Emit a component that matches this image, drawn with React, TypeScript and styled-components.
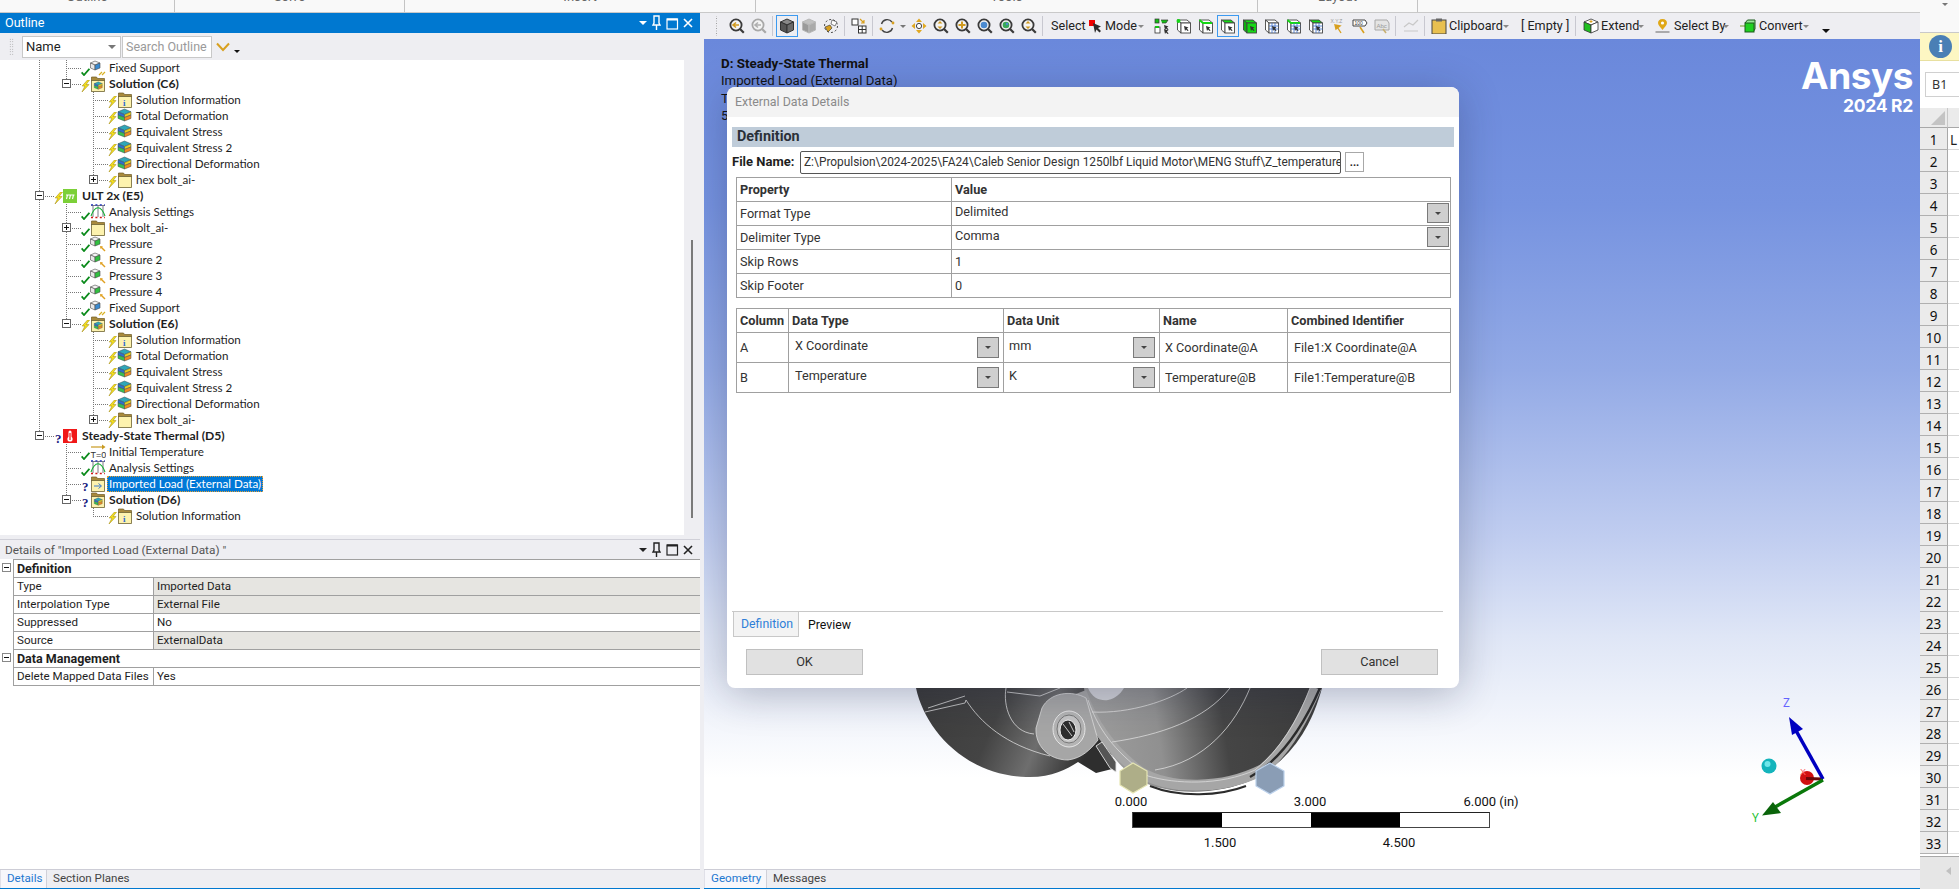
import React from "react";
import styled, { createGlobalStyle, css } from "styled-components";

const FONT = `Roboto, "Noto Sans", "Liberation Sans", sans-serif`;

const Global = createGlobalStyle`
  html, body { margin: 0; padding: 0; background: #eeeef2; overflow: hidden; }
  #root { width: 1959px; height: 889px; }
  * { box-sizing: border-box; }
`;

const Page = styled.div`
  width: 1959px; height: 889px; display: flex; overflow: hidden;
  font: 11.5px/16px ${FONT}; color: #1e1e1e; background: #eeeef2;
`;
const MainColumn = styled.div`width: 1920px; display: flex; flex-direction: column;`;
const Ribbon = styled.div`
  height: 13px; flex: none; display: flex; background: #f9f9f9; border-bottom: 1px solid #c9c9c9; overflow: hidden;
`;
const RibbonGroup = styled.div<{ $w: number }>`
  width: ${p => p.$w}px; flex: none; height: 12px; border-right: 1px solid #c4c4c4; display: flex; justify-content: center;
  & > span { font-size: 13px; line-height: 16px; margin-top: -11px; color: #666; }
`;
const Workspace = styled.div`flex: 1; display: flex; min-height: 0;`;

/* ---------- left pane ---------- */
const LeftPane = styled.div`width: 700px; flex: none; display: flex; flex-direction: column;`;
const TitleBar = styled.div<{ $active?: boolean }>`
  height: 20px; flex: none; display: flex; align-items: center; padding: 0 6px 0 5px; gap: 4px; white-space: nowrap;
  background: ${p => (p.$active ? "#0078d0" : "#eeeef2")};
  color: ${p => (p.$active ? "#fff" : "#555")};
  font-size: ${p => (p.$active ? "12.6px" : "11.8px")};
  ${p => !p.$active && css`border-top: 1px solid #d0d0d8;`}
`;
const TitleGrip = styled.div<{ $active?: boolean }>`
  flex: 1; height: 7px; margin: 0 4px 0 3px;
  background-image: radial-gradient(${p => (p.$active ? "#6db0e8" : "#bcbcc0")} 0.6px, transparent 0.7px);
  background-size: 2px 2px;
`;
const TitleButtons = styled.div`display: flex; gap: 3px; align-items: center;`;
const OutlineTools = styled.div`
  height: 27px; flex: none; display: flex; align-items: center; padding: 0 0 0 9px; background: #eeeef2;
`;
const GripDots = styled.div`
  width: 5px; height: 18px; margin-right: 8px;
  background-image: radial-gradient(#9a9a9a 0.7px, transparent 0.8px); background-size: 2.5px 2.5px;
`;
const NameSelect = styled.div`
  width: 99px; height: 22px; background: #fff; border: 1px solid #c8c8c8; display: flex; align-items: center;
  justify-content: space-between; padding: 0 4px 0 3px; font-size: 13px;
`;
const SearchBox = styled.div`
  width: 90px; height: 22px; margin-left: 1px; background: #fff; border: 1px solid #c8c8c8; display: flex; align-items: center;
  padding: 0 3px; color: #9a9a9a; font-size: 12.5px; white-space: nowrap; overflow: hidden;
`;
const CaretDown = styled.span<{ $c?: string; $s?: number }>`
  display: inline-block; flex: none; width: 0; height: 0;
  border-left: ${p => p.$s ?? 4}px solid transparent; border-right: ${p => p.$s ?? 4}px solid transparent;
  border-top: ${p => p.$s ?? 4}px solid ${p => p.$c ?? "#555"};
`;
const FilterChevron = styled.span`display: flex; margin-left: 4px; width: 16px;`;
const OverflowCaret = styled.span`display: flex; margin: 9px 0 0 2px;`;

const TreeFrame = styled.div`height: 475px; flex: none; display: flex;`;
const Tree = styled.div`width: 684px; background: #fff; overflow: hidden;`;
const ScrollTrack = styled.div`flex: 1; background: #eeeef2; display: flex; justify-content: center; padding-top: 180px;`;
const ScrollThumb = styled.div`width: 2px; height: 278px; background: #7a7a7a;`;
const PaneGap = styled.div`height: 4px; flex: none; background: #eeeef2;`;

const dots = `repeating-linear-gradient(to bottom, #777 0 1px, transparent 1px 2px)`;
const Row = styled.div`height: 16px; display: flex; align-items: stretch; padding-left: 39px; white-space: nowrap;`;
const Guide = styled.div<{ $on: boolean }>`
  width: 27px; flex: none; position: relative;
  ${p => p.$on && css`background: ${dots} left top / 1px 100% no-repeat;`}
`;
const Branch = styled.div<{ $last?: boolean }>`
  width: 15px; flex: none; position: relative;
  background:
    ${dots} left top / 1px ${p => (p.$last ? "8px" : "100%")} no-repeat,
    repeating-linear-gradient(to right, #777 0 1px, transparent 1px 2px) left 8px / 15px 1px no-repeat;
`;
const Expander = styled.span<{ $open: boolean }>`
  position: absolute; left: -4px; top: 3px; width: 9px; height: 9px; border: 1px solid #666; background: #fff;
  &::before { content: ""; position: absolute; left: 1px; top: 3px; width: 5px; height: 1px; background: #111; }
  ${p => !p.$open && css`&::after { content: ""; position: absolute; left: 3px; top: 1px; width: 1px; height: 5px; background: #111; }`}
`;
const StatusSlot = styled.span`
  width: 9px; flex: none; position: relative; display: flex; align-items: flex-end; color: #1a2a8a;
`;
const QuestionMark = styled.span`font: bold 13px/13px "Liberation Serif", serif; color: #17207f; margin: 0 0 -1px 1px;`;
const IconSlot = styled.span`width: 16px; flex: none; display: flex; align-items: center;`;
const NodeLabel = styled.span<{ $bold?: boolean; $sel?: boolean }>`
  margin-left: 1px; padding: 0 2px; line-height: 16px; height: 16px; font-family: Lato, ${FONT}; font-size: 11.6px; font-weight: ${p => (p.$bold ? 700 : 400)};
  ${p => p.$bold && css`font-size: 12.2px;`}
  ${p => p.$sel && css`background: #0078d7; color: #fff; outline: 1px dotted #e8a030; outline-offset: -1px;`}
`;

const DetailsBody = styled.div`flex: 1; background: #fff; display: flex; flex-direction: column; min-height: 0; font-size: 11.6px;`;
const DRow = styled.div`display: flex; height: 18px; padding-left: 13px; position: relative;`;
const DGroup = styled.div`
  flex: 1; border-top: 1px solid #a0a0a0; border-left: 1px solid #a0a0a0; padding-left: 3px;
  font-weight: 700; line-height: 17px; font-size: 12.5px;
`;
const DCellA = styled.div`
  width: 140px; flex: none; border-top: 1px solid #a0a0a0; border-left: 1px solid #a0a0a0; padding-left: 3px; line-height: 17px;
  white-space: nowrap; overflow: hidden;
`;
const DCellB = styled.div<{ $grey?: boolean }>`
  flex: 1; border-top: 1px solid #a0a0a0; border-left: 1px solid #a0a0a0; padding-left: 3px; line-height: 17px;
  background: ${p => (p.$grey ? "#e6e5e1" : "#fff")};
`;
const DBottom = styled.div`height: 1px; margin-left: 13px; background: #a0a0a0;`;
const DExpander = styled.span`
  position: absolute; left: 2px; top: 4px; width: 9px; height: 9px; border: 1px solid #888; background: #fff;
  &::before { content: ""; position: absolute; left: 1px; top: 3px; width: 5px; height: 1px; background: #111; }
`;
const TabBar = styled.div`
  height: 20px; flex: none; display: flex; background: #eeeef2; border-top: 1px solid #cdcdd6; border-bottom: 1px solid #0078d0;
`;
const TabItem = styled.div<{ $on?: boolean; $w?: number }>`
  height: 18px; line-height: 17px; padding: 0 6px; font-size: 11.6px;
  ${p => p.$w && css`width: ${p.$w}px;`}
  ${p => p.$on ? css`background: #f7f7fb; color: #1e78d0; border-right: 1px solid #d0d0d8; border-left: 1px solid #e0e0e8;` : css`color: #444;`}
`;

/* ---------- view pane ---------- */
const ViewPane = styled.div`flex: 1; display: flex; flex-direction: column; padding-left: 4px; min-width: 0;`;
const Toolbar = styled.div`
  height: 26px; flex: none; display: flex; align-items: center; padding-left: 8px; background: #eeeef2; white-space: nowrap;
`;
const ToolGrip = styled.div`
  width: 8px; height: 20px; margin-right: 6px;
  background: radial-gradient(#a0a0a0 0.7px, transparent 0.8px) center / 2.5px 2.5px repeat-y;
`;
const ToolBtn = styled.span<{ $on?: boolean }>`
  width: 22px; height: 22px; flex: none; display: flex; align-items: center; justify-content: center;
  ${p => p.$on && css`outline: 1px solid #3c9af0; outline-offset: -1px;`}
`;
const ToolSep = styled.span`width: 1px; height: 20px; flex: none; background: #c8c8d0; margin: 0 3px 0 2px;`;
const ToolText = styled.span<{ $w: number; $ml?: number }>`
  width: ${p => p.$w}px; margin-left: ${p => p.$ml ?? 0}px; flex: none; font-size: 12.6px; line-height: 26px; color: #222;
`;
const ToolArrow = styled.span<{ $w?: number }>`
  width: ${p => p.$w ?? 10}px; flex: none; display: flex; justify-content: center; align-items: center; height: 26px;
`;
const ToolSpace = styled.span<{ $w: number }>`width: ${p => p.$w}px; flex: none;`;
const Overflow = styled.span`display: flex; margin: 10px 0 0 11px;`;

const Viewport = styled.div`
  flex: 1; position: relative; overflow: hidden;
  background: linear-gradient(to bottom, #6a88db 0%, #7693e0 20%, #93aae6 40%, #c0cdf0 60%, #dfe6f6 72%, #fff 89%, #fff 100%);
`;
const Scene = styled.svg`position: absolute; left: 0; top: 0;`;
const ModelTitle = styled.div`position: absolute; left: 17px; top: 16px; font-size: 13.2px; line-height: 17.4px; color: #111;`;
const ModelHead = styled.div`font-weight: 700; font-size: 13.4px;`;
const BrandBlock = styled.div`
  position: absolute; right: 7px; top: 17px; color: #fff; font-family: Inter, ${FONT}; font-weight: 700; text-align: right;
`;
const BrandName = styled.div`font-size: 37px; line-height: 40px; letter-spacing: -0.5px;`;
const BrandVersion = styled.div`font-size: 17.5px; line-height: 20px; letter-spacing: -0.3px;`;
const ScaleLabel = styled.span<{ $x: number; $y: number }>`
  position: absolute; left: ${p => p.$x}px; top: ${p => p.$y}px; font-size: 13px; line-height: 16px; color: #111; transform: translateX(-50%); white-space: nowrap;
`;
const ScaleBar = styled.div`
  position: absolute; left: 428px; top: 773px; width: 358px; height: 16px; display: flex; border: 1px solid #444; border-top-color: #222; background: #fff;
`;
const ScaleSeg = styled.div<{ $black: boolean }>`flex: 1; background: ${p => (p.$black ? "#000" : "#fff")};`;

/* ---------- dialog ---------- */
const Dialog = styled.div`
  position: absolute; left: 23px; top: 48px; width: 732px; height: 601px; background: #fff; border-radius: 8px;
  box-shadow: 0 6px 40px rgba(20, 30, 60, 0.28); display: flex; flex-direction: column; overflow: hidden; font-size: 12.7px;
`;
const DialogTitle = styled.div`
  height: 30px; flex: none; background: #f3f3f3; color: #8a8a8a; font-size: 12.4px; line-height: 30px; padding-left: 8px; border-radius: 8px 8px 0 0;
`;
const DialogBody = styled.div`flex: 1; display: flex; flex-direction: column; padding: 10px 5px 0;`;
const SectionBar = styled.div`
  height: 20px; flex: none; background: #bfccd9; color: #2a3038; font-weight: 700; font-size: 14.4px; line-height: 20px; padding-left: 5px;
`;
const FileRow = styled.div`display: flex; align-items: center; height: 22px; margin-top: 4px;`;
const FileLabel = styled.span`width: 68px; flex: none; font-weight: 700; font-size: 13px; white-space: nowrap;`;
const FileInput = styled.div`
  width: 541px; height: 23px; flex: none; border: 1px solid #555; border-radius: 2px; line-height: 21px; padding: 0 3px; white-space: nowrap; overflow: hidden;
  color: #333; font-size: 11.9px;
`;
const DotsButton = styled.div`
  width: 19px; height: 20px; flex: none; margin-left: 4px; border: 1px solid #a8a8a8; background: #fff; text-align: center; font-weight: 700; line-height: 20px; font-size: 11px;
`;
const Table = styled.table`
  border-collapse: collapse; table-layout: fixed; width: 714px; margin-left: 4px; font-size: 12.7px; color: #333;
  td, th { border: 1px solid #a0a0a0; padding: 0 3px; text-align: left; position: relative; white-space: nowrap; overflow: hidden; }
  th { font-weight: 700; height: 24px; line-height: 20px; }
  td { height: 24px; }
`;
const PropTable = styled(Table)`margin-top: 4px;`;
const DataTable = styled(Table)`
  margin-top: 10px;
  td { height: 30px; }
`;
const PadText = styled.span<{ $l?: number; $up?: number }>`
  display: block; padding-left: ${p => p.$l ?? 0}px; margin-top: ${p => -(p.$up ?? 0)}px;
`;
const DropBtn = styled.span<{ $big?: boolean }>`
  position: absolute; right: ${p => (p.$big ? 4 : 1)}px; top: ${p => (p.$big ? 4 : 1)}px;
  width: 22px; height: ${p => (p.$big ? 21 : 20)}px;
  background: #cfcfcf; border: 1px solid #7a7a7a; display: flex; align-items: center; justify-content: center;
`;
const DialogSpacer = styled.div`flex: 1;`;
const TabLine = styled.div`height: 1px; width: 711px; flex: none; background: #c8c8c8;`;
const DlgTabs = styled.div`display: flex; height: 25px; flex: none; margin-left: 1px;`;
const DlgTab = styled.div<{ $on?: boolean }>`
  height: 25px; line-height: 27px; font-size: 12.3px; padding: 0 9px 0 9px;
  ${p => p.$on ? css`width: 66px; padding-left: 7px; background: #f3f3f3; border: 1px solid #c8c8c8; border-top: 0; color: #2f7fd8; line-height: 25px;` : css`color: #111;`}
`;
const DlgActions = styled.div`display: flex; justify-content: space-between; padding: 12px 16px 0 14px; height: 51px; flex: none;`;
const DlgButton = styled.div`
  width: 117px; height: 26px; background: #e1e1e1; border: 1px solid #c0c0c0; text-align: center; line-height: 24px; font-size: 12.7px; color: #333;
`;

/* ---------- right panel ---------- */
const RightPanel = styled.div`width: 39px; flex: none; display: flex; flex-direction: column; background: #fff; overflow: hidden;`;
const RightTop = styled.div`
  height: 33px; flex: none; background: #f9f9f9; border-bottom: 1px solid #c9c9c9; display: flex; justify-content: center; padding: 3px 0 0 10px;
`;
const InfoBand = styled.div`height: 28px; flex: none; background: #fdf7c3; display: flex; align-items: center; padding-left: 9px; border-bottom: 1px solid #e8e0a0;`;
const InfoDot = styled.span`
  width: 23px; height: 23px; flex: none; border-radius: 50%; background: #4a7fb5; color: #fff; font: 700 17px/23px "Liberation Serif", serif; text-align: center;
`;
const NameBox = styled.div`
  height: 25px; flex: none; margin: 11px 0 11px 5px; border: 1px solid #d0d0d0; border-right: 0; font: 12.5px/23px "Noto Sans", sans-serif; padding-left: 6px; color: #333;
`;
const GridRow = styled.div<{ $h?: number }>`display: flex; height: ${p => p.$h ?? 22}px; flex: none;`;
const RowHead = styled.div`
  width: 28px; flex: none; background: #ebebeb; border-bottom: 1px solid #b0b0b0; border-right: 1px solid #a8a8a8; text-align: center; font: 13.5px/25px "Noto Sans", sans-serif; color: #111; overflow: hidden;
`;
const Corner = styled.div`width: 28px; flex: none; background: #ebebeb; border-bottom: 1px solid #a8a8a8; border-right: 1px solid #c8c8c8; display: flex; align-items: flex-end; justify-content: flex-end; padding: 0 2px 2px 0;`;
const Cell = styled.div`flex: 1; border-bottom: 1px solid #d8d8d8; font: 13.5px/25px "Noto Sans", sans-serif; padding-left: 2px; overflow: hidden;`;
const ColHead = styled.div`flex: 1; background: #ebebeb; border-bottom: 1px solid #a8a8a8;`;
const SheetFoot = styled.div`flex: 1; margin-top: 2px; background: #e6e6e6; border-top: 1px solid #a8a8a8; display: flex; align-items: center; padding: 0 0 4px 26px;`;
const LeftTri = styled.span`width: 0; height: 0; border-top: 4px solid transparent; border-bottom: 4px solid transparent; border-right: 5px solid #c0c0c0;`;

/* ---------- icons ---------- */
const G = ({ s = 16, h, children }: { s?: number; h?: number; children: React.ReactNode }) => (
  <svg width={s} height={h ?? s} viewBox={`0 0 ${s} ${h ?? s}`} fill="none">{children}</svg>
);
const Check = () => (
  <svg width="9" height="8" viewBox="0 0 9 8"><path d="M0.6 4.4 L3 7 L8.4 0.8" stroke="#0a8a1a" strokeWidth="1.8" fill="none" /></svg>
);
const Bolt = () => (
  <svg width="9" height="12" viewBox="0 0 9 12"><path d="M6.5 0 L1.2 6 L4 6 L1 12 L8 4.6 L5 4.6 L8.5 0 Z" fill="#f6e21c" stroke="#a89018" strokeWidth="0.6" /></svg>
);
const Folder = ({ children, body = "#fdf2ae" }: { children?: React.ReactNode; body?: string }) => (
  <G>
    <path d="M1.5 1 H6.5 L7.5 2.5 H14.5 V5 H1.5 Z" fill="#a98a3c" stroke="#6f5a24" strokeWidth="0.7" />
    <rect x="1.5" y="4.5" width="13" height="11" fill={body} stroke="#6f6433" strokeWidth="0.8" />
    {children}
  </G>
);
const RainbowCube = ({ x = 0, y = 0, k = 1 }: { x?: number; y?: number; k?: number }) => (
  <g transform={`translate(${x} ${y}) scale(${k})`} stroke="#3f4a4f" strokeWidth="0.5">
    <polygon points="7.5,1 14,3.8 7.5,6.6 1,3.8" fill="#2fa6b8" />
    <polygon points="1,3.8 7.5,6.6 7.5,9.5 1,7" fill="#2d6fd0" />
    <polygon points="1,7 7.5,9.5 7.5,13 1,10.4" fill="#38c050" />
    <polygon points="7.5,6.6 14,3.8 14,7 7.5,9.5" fill="#e8d020" />
    <polygon points="7.5,9.5 14,7 14,10.4 7.5,13" fill="#f08a20" />
  </g>
);
const SupportCube = ({ accent }: { accent: string }) => (
  <g stroke="#4a4a4a" strokeWidth="0.6">
    <polygon points="5,1 10,3 5,5 0.5,3" fill="#f4f4f4" />
    <polygon points="0.5,3 5,5 5,10 0.5,8" fill="#e8e8e8" />
    <polygon points="5,5 10,3 10,8 5,10" fill={accent} />
  </g>
);
const TreeIcon = ({ kind }: { kind: string }) => {
  switch (kind) {
    case "support":
      return <G><SupportCube accent="#3a8ad0" /><path d="M9 15 L12 12 M12 15 L15 12" stroke="#d8b020" strokeWidth="1.2" /></G>;
    case "pressure":
      return <G><SupportCube accent="#30c040" /><path d="M15 15 L11 11" stroke="#e0a020" strokeWidth="1.4" /><path d="M10 10 L13 10.5 L10.5 13 Z" fill="#e0a020" /></G>;
    case "solution":
      return <Folder><RainbowCube x={3.6} y={5.2} k={0.62} /></Folder>;
    case "info":
      return <Folder><text x="6" y="14" fontSize="9" fontFamily="Liberation Serif" fontWeight="700" fill="#2a6ad0">i</text></Folder>;
    case "result":
      return <G><RainbowCube /></G>;
    case "folder":
      return <Folder />;
    case "import":
      return <Folder><path d="M4 10 H11 M8.5 7.5 L11.5 10 L8.5 12.5" stroke="#3a7ad0" strokeWidth="1" /></Folder>;
    case "ult":
      return (
        <G h={14} s={14}>
          <rect width="14" height="14" fill="#7cd038" />
          <path d="M3 6 H11.5 M4.5 6 L3.5 10 M7.5 6 L6.5 10 M10.5 6 L9.5 10" stroke="#fff" strokeWidth="1.1" />
        </G>
      );
    case "thermal":
      return (
        <G h={14} s={14}>
          <rect width="14" height="14" fill="#f01818" />
          <rect x="5.5" y="1.5" width="3" height="8" rx="1.5" fill="#fff" />
          <circle cx="7" cy="10" r="2.6" fill="#fff" />
          <rect x="6.4" y="4" width="1.2" height="7" fill="#f01818" />
        </G>
      );
    case "settings":
      return (
        <G>
          <path d="M1 1.5 H15 M3 2 V13 M8 2 V13 M13 2 V13" stroke="#556" strokeWidth="0.8" />
          <path d="M1 13.5 H15" stroke="#d01818" strokeWidth="1.4" strokeDasharray="2 2.4" />
          <path d="M1 0.8 H15" stroke="#1a30c0" strokeWidth="1.2" strokeDasharray="2 2.4" />
          <path d="M1 12 C5 1 11 1 15 12" stroke="#10b030" strokeWidth="1.1" />
        </G>
      );
    case "init":
      return (
        <G>
          <path d="M1 3 H13" stroke="#c89a20" strokeWidth="1.2" />
          <path d="M12 0.5 L15.5 3 L12 5.5 Z" fill="#c89a20" />
          <text x="0.5" y="14" fontSize="9" fontFamily="Liberation Sans" fill="#333">T=0</text>
        </G>
      );
    default:
      return null;
  }
};
const Mag = ({ inner, dim }: { inner: string; dim?: boolean }) => {
  const c = dim ? "#a8a8a8" : "#3a3a3a";
  return (
    <G>
      <line x1="10.8" y1="10.8" x2="14.8" y2="14.8" stroke={c} strokeWidth="2.2" />
      <circle cx="7" cy="7" r="5.6" fill="#f4f4f4" stroke={c} strokeWidth="1.8" />
      {inner === "back" && <path d="M10 7 H4.5 M7 4.5 L4 7 L7 9.5" stroke={dim ? "#b0b0b0" : "#d09a20"} strokeWidth="1.6" />}
      {inner === "plus" && <path d="M7 3.5 V10.5 M3.5 7 H10.5" stroke="#d09a20" strokeWidth="2" />}
      {inner === "blue" && <circle cx="7" cy="7" r="3.3" fill="#4a8ad0" />}
      {inner === "green" && <><circle cx="7" cy="7" r="3.3" fill="#38a858" /><circle cx="8" cy="6" r="1.2" fill="#4a8ad0" /></>}
      {inner === "updown" && <path d="M7 3 L9.5 5.5 H4.5 Z M7 11 L4.5 8.5 H9.5 Z" fill="#d09a20" />}
    </G>
  );
};
const Iso = ({ top, left, right, stroke = "#333" }: { top: string; left: string; right: string; stroke?: string }) => (
  <G>
    <g stroke={stroke} strokeWidth="1">
      <polygon points="8,1 14.5,4 8,7 1.5,4" fill={top} />
      <polygon points="1.5,4 8,7 8,15 1.5,12" fill={left} />
      <polygon points="8,7 14.5,4 14.5,12 8,15" fill={right} />
    </g>
  </G>
);
const Cursor = ({ x, y, c = "#333" }: { x: number; y: number; c?: string }) => (
  <path transform={`translate(${x} ${y})`} d="M0 0 L4.5 1.6 L2.9 2.6 L4.6 4.4 L3.6 5 L2 3.4 L1 5 Z" fill={c} />
);
const SelBox = ({ mode, mesh }: { mode: string; mesh?: boolean }) => {
  const body = mode === "body";
  return (
    <G>
      <g stroke="#444" strokeWidth="0.9">
        <polygon points="1.5,2 11,2 14.5,5 5,5" fill={body || mode === "face" ? "#16d816" : "#fff"} />
        <polygon points="1.5,2 5,5 5,15 1.5,12" fill={body ? "#10b010" : "#fff"} />
        <rect x="5" y="5" width="9.5" height="10" fill={body ? "#16d816" : "#fff"} />
      </g>
      {mode === "vertex" && <circle cx="2.5" cy="3" r="2" fill="#16d816" />}
      {mode === "edge" && <path d="M1.5 2 L5 5 H14" stroke="#16d816" strokeWidth="2" />}
      {mesh && <path d="M8 5 V15 M11 5 V15 M5 8 H14.5 M5 11 H14.5" stroke="#3a70d0" strokeWidth="0.8" />}
      <Cursor x={8} y={8} />
    </G>
  );
};

const toolIcons = {
  sel4: (
    <G>
      <rect x="1" y="1" width="4" height="4" fill="#16c016" stroke="#333" strokeWidth="0.7" />
      <path d="M7 2 H14 L12 5 H8" fill="#16c016" stroke="#333" strokeWidth="0.7" />
      <rect x="1" y="9" width="5" height="6" fill="#fff" stroke="#333" strokeWidth="0.8" />
      <path d="M1 9 H5" stroke="#16c016" strokeWidth="2" />
      <Cursor x={10} y={7} />
      <Cursor x={10} y={11} />
    </G>
  ),
};

/* ---------- data ---------- */
type Node = {
  label: string; level: 1 | 2 | 3; icon: string; status: "check" | "bolt" | "q";
  guides: boolean[]; open?: boolean; bold?: boolean; last?: boolean; sel?: boolean;
};
const L2 = (label: string, icon: string, status: Node["status"], extra: Partial<Node> = {}, on = true): Node =>
  ({ label, level: 2, icon, status, guides: [on], ...extra });
const L3 = (label: string, icon: string, status: Node["status"], extra: Partial<Node> = {}, on = true): Node =>
  ({ label, level: 3, icon, status, guides: [on, false], ...extra });
const results = (): Node[] => [
  L3("Solution Information", "info", "bolt"),
  L3("Total Deformation", "result", "bolt"),
  L3("Equivalent Stress", "result", "bolt"),
  L3("Equivalent Stress 2", "result", "bolt"),
  L3("Directional Deformation", "result", "bolt"),
  L3("hex bolt_ai-", "folder", "bolt", { open: false, last: true }),
];
const nodes: Node[] = [
  L2("Fixed Support", "support", "check"),
  L2("Solution (C6)", "solution", "bolt", { open: true, bold: true, last: true }),
  ...results(),
  { label: "ULT 2x (E5)", level: 1, icon: "ult", status: "bolt", guides: [], open: true, bold: true },
  L2("Analysis Settings", "settings", "check"),
  L2("hex bolt_ai-", "folder", "check", { open: false }),
  L2("Pressure", "pressure", "check"),
  L2("Pressure 2", "pressure", "check"),
  L2("Pressure 3", "pressure", "check"),
  L2("Pressure 4", "pressure", "check"),
  L2("Fixed Support", "support", "check"),
  L2("Solution (E6)", "solution", "bolt", { open: true, bold: true, last: true }),
  ...results(),
  { label: "Steady-State Thermal (D5)", level: 1, icon: "thermal", status: "q", guides: [], open: true, bold: true, last: true },
  L2("Initial Temperature", "init", "check", {}, false),
  L2("Analysis Settings", "settings", "check", {}, false),
  L2("Imported Load (External Data)", "import", "q", { sel: true }, false),
  L2("Solution (D6)", "solution", "q", { open: true, bold: true, last: true }, false),
  L3("Solution Information", "info", "bolt", { last: true }, false),
];

const WindowButtons = ({ light }: { light?: boolean }) => {
  const c = light ? "#fff" : "#222";
  return (
    <TitleButtons>
      <CaretDown $c={c} $s={4} />
      <svg width="13" height="16" viewBox="0 0 13 16"><path d="M4 1 H9 V8 L10 10 H3 L4 8 Z M6.5 10 V15" stroke={c} strokeWidth="1.4" fill="none" /></svg>
      <svg width="13" height="13" viewBox="0 0 13 13"><rect x="1" y="2" width="10.5" height="10" stroke={c} strokeWidth="1.2" fill="none" /><path d="M1 2.5 H11.5" stroke={c} strokeWidth="2" /></svg>
      <svg width="12" height="12" viewBox="0 0 12 12"><path d="M2 2 L10 10 M10 2 L2 10" stroke={c} strokeWidth="1.6" /></svg>
    </TitleButtons>
  );
};

const TreeRow = ({ n }: { n: Node }) => (
  <Row>
    {n.guides.map((on, i) => <Guide key={i} $on={on} />)}
    <Branch $last={n.last}>
      {n.open !== undefined && <Expander $open={n.open} />}
    </Branch>
    <StatusSlot>
      {n.status === "check" && <Check />}
      {n.status === "bolt" && <Bolt />}
      {n.status === "q" && <QuestionMark>?</QuestionMark>}
    </StatusSlot>
    <IconSlot><TreeIcon kind={n.icon} /></IconSlot>
    <NodeLabel $bold={n.bold} $sel={n.sel}>{n.label}</NodeLabel>
  </Row>
);

const ModelArt = () => (
  <Scene width="1216" height="830" viewBox="704 39 1216 830">
    <defs>
      <linearGradient id="leftShell" gradientUnits="userSpaceOnUse" x1="916" y1="700" x2="1080" y2="770">
        <stop offset="0" stopColor="#3c3c3c" /><stop offset="0.45" stopColor="#444" /><stop offset="0.72" stopColor="#6e6e6e" /><stop offset="1" stopColor="#2e2e2e" />
      </linearGradient>
      <linearGradient id="rightShell" gradientUnits="userSpaceOnUse" x1="1095" y1="730" x2="1300" y2="700">
        <stop offset="0" stopColor="#9c9c9c" /><stop offset="0.3" stopColor="#909090" /><stop offset="0.62" stopColor="#454545" /><stop offset="1" stopColor="#3e3e3e" />
      </linearGradient>
    </defs>
    <path d="M916 688 C925 730 965 775 1026 777 C1050 778 1066 770 1078 762 L1096 773 L1116 768 L1090 688 Z" fill="url(#leftShell)" />
    <path d="M1084 688 L1322 688 C1312 725 1292 760 1252 780 C1215 796 1165 796 1135 778 C1105 755 1088 720 1084 688 Z" fill="url(#rightShell)" />
    <path d="M1088 688 C1092 698 1100 701 1108 700 C1116 698 1120 694 1124 688 Z" fill="#cfd0d6" />
    <path d="M1081 692 C1092 722 1108 748 1140 772 C1170 790 1222 790 1262 770 C1285 752 1302 722 1316 688" stroke="#a6a6a6" strokeWidth="11" fill="none" />
    <path d="M1250 777 C1285 758 1306 720 1320 688" stroke="#2c2c2c" strokeWidth="2.4" fill="none" />
    <path d="M1150 786 C1180 798 1220 796 1246 786" stroke="#2c2c2c" strokeWidth="2" fill="none" />
    <path d="M1042 708 C1050 692 1072 690 1086 698 L1098 740 C1090 750 1082 758 1068 760 C1048 760 1035 745 1036 728 Z" fill="#a6a6a6" stroke="#dcdcdc" strokeWidth="0.8" />
    <ellipse cx="1069" cy="729" rx="16" ry="18" fill="#b4b4b4" stroke="#e6e6e6" />
    <ellipse cx="1069" cy="729" rx="12" ry="14" fill="#c6c6c6" stroke="#777" />
    <ellipse cx="1068" cy="730" rx="8" ry="10" fill="#2e2e2e" stroke="#eee" />
    <path d="M1063 724 L1072 736 M1069 722 L1074 732" stroke="#ddd" strokeWidth="0.9" />
    <path d="M1096 746 L1102 742 L1116 762 L1116 772 L1110 768 Z" fill="#555" stroke="#e4e4e4" strokeWidth="0.9" />
    <g stroke="#dcdcdc" strokeWidth="0.8" fill="none">
      <path d="M925 712 L965 703 L966 700 M928 708 L965 696 M966 700 C980 722 1005 745 1050 756" />
      <path d="M1006 688 C1003 705 1010 732 1034 734" />
      <path d="M1007 692 L1040 696 L1060 688" />
      <path d="M1092 712 C1130 714 1170 700 1187 688" />
      <path d="M1112 742 C1160 735 1205 720 1230 688" />
      <path d="M1155 770 C1205 762 1235 725 1250 688" />
      <path d="M1088 700 C1100 735 1120 755 1148 776 C1175 784 1220 786 1255 770 C1280 750 1298 720 1310 688" />
    </g>
    <polygon points="1133,763 1147,771 1147,785 1133,793 1120,785 1120,771" fill="#aeae88" stroke="#e6e6b4" strokeWidth="1.2" />
    <polygon points="1270,763 1284,771 1284,786 1270,794 1256,786 1256,771" fill="#8a9db5" stroke="#bdd2ec" strokeWidth="1.2" />
    <circle cx="1769" cy="766" r="7.5" fill="#14b4bc" />
    <circle cx="1767.5" cy="764" r="3" fill="#6fe6ea" />
    <circle cx="1807" cy="778" r="7" fill="#d01010" />
    <text x="1800" y="775" fontSize="9" fill="#ff6a6a" fontFamily="Liberation Sans">X</text>
    <line x1="1806" y1="778.5" x2="1823" y2="779" stroke="#6a0808" strokeWidth="3" />
    <line x1="1823" y1="779" x2="1794" y2="727" stroke="#0000c0" strokeWidth="3.5" />
    <polygon points="1789,717 1803,729 1792,735" fill="#0000c0" />
    <line x1="1823" y1="780" x2="1775" y2="807" stroke="#0a780a" strokeWidth="3.5" />
    <polygon points="1762,815.5 1773,802 1781,813" fill="#0a640a" />
    <text x="1783" y="707" fontSize="12" fill="#6464ff" fontFamily="Noto Sans">Z</text>
    <text x="1752" y="822" fontSize="12" fill="#22c030" fontFamily="Noto Sans">Y</text>
  </Scene>
);

export default function App() {
  const rows = Array.from({ length: 33 }, (_, i) => i + 1);
  return (
    <Page>
      <Global />
      <MainColumn>
        <Ribbon>
          <RibbonGroup $w={175}><span>Outline</span></RibbonGroup>
          <RibbonGroup $w={230}><span>Solve</span></RibbonGroup>
          <RibbonGroup $w={351}><span>Insert</span></RibbonGroup>
          <RibbonGroup $w={502}><span>Tools</span></RibbonGroup>
          <RibbonGroup $w={160}><span>Layout</span></RibbonGroup>
        </Ribbon>
        <Workspace>
          <LeftPane>
            <TitleBar $active>Outline<TitleGrip $active /><WindowButtons light /></TitleBar>
            <OutlineTools>
              <GripDots />
              <NameSelect>Name<CaretDown $c="#777" $s={4} /></NameSelect>
              <SearchBox>Search Outline</SearchBox>
              <FilterChevron>
                <svg width="14" height="10" viewBox="0 0 14 10"><path d="M1 1.5 L7 8 L13 1.5" stroke="#d8a020" strokeWidth="2" fill="none" /></svg>
              </FilterChevron>
              <OverflowCaret><CaretDown $c="#111" $s={3} /></OverflowCaret>
            </OutlineTools>
            <TreeFrame>
              <Tree>{nodes.map((n, i) => <TreeRow key={i} n={n} />)}</Tree>
              <ScrollTrack><ScrollThumb /></ScrollTrack>
            </TreeFrame>
            <PaneGap />
            <TitleBar>Details of "Imported Load (External Data) "<TitleGrip /><WindowButtons /></TitleBar>
            <DetailsBody>
              <DRow><DExpander /><DGroup>Definition</DGroup></DRow>
              <DRow><DCellA>Type</DCellA><DCellB $grey>Imported Data</DCellB></DRow>
              <DRow><DCellA>Interpolation Type</DCellA><DCellB $grey>External File</DCellB></DRow>
              <DRow><DCellA>Suppressed</DCellA><DCellB>No</DCellB></DRow>
              <DRow><DCellA>Source</DCellA><DCellB $grey>ExternalData</DCellB></DRow>
              <DRow><DExpander /><DGroup>Data Management</DGroup></DRow>
              <DRow><DCellA>Delete Mapped Data Files</DCellA><DCellB>Yes</DCellB></DRow>
              <DBottom />
            </DetailsBody>
            <TabBar>
              <TabItem $on $w={47}>Details</TabItem>
              <TabItem>Section Planes</TabItem>
            </TabBar>
          </LeftPane>
          <ViewPane>
            <Toolbar>
              <ToolGrip />
              <ToolBtn><Mag inner="back" /></ToolBtn>
              <ToolBtn><Mag inner="back" dim /></ToolBtn>
              <ToolSep />
              <ToolBtn $on><Iso top="#888" left="#555" right="#6a6a6a" /></ToolBtn>
              <ToolBtn><Iso top="#c0c0c0" left="#9a9a9a" right="#aaa" stroke="#b8b8b8" /></ToolBtn>
              <ToolBtn>
                <G>
                  <circle cx="8" cy="8" r="6.5" stroke="#444" strokeDasharray="2 2" />
                  <polygon points="2,9 7,7 9,10 5,14" fill="#d8a020" stroke="#333" strokeWidth="0.6" />
                  <polygon points="9,2 14,4 12,8 8,6" fill="#fff" stroke="#333" strokeWidth="0.6" />
                </G>
              </ToolBtn>
              <ToolSep />
              <ToolBtn>
                <G>
                  <rect x="1" y="1" width="6" height="6" fill="#fff" stroke="#333" />
                  <path d="M9 1 L13 5 M13 2 V5 H10" stroke="#d8a020" strokeWidth="1.2" />
                  <rect x="7.5" y="8" width="7.5" height="7" fill="#fff" stroke="#333" />
                  <path d="M11.2 8 V15 M7.5 11.5 H15" stroke="#333" />
                </G>
              </ToolBtn>
              <ToolSep />
              <ToolBtn>
                <G>
                  <path d="M2.5 6 A6 6 0 0 1 13 4" stroke="#444" strokeWidth="1.4" />
                  <path d="M13.5 10 A6 6 0 0 1 3 12" stroke="#444" strokeWidth="1.4" />
                  <circle cx="14" cy="5" r="1.4" fill="#d8a020" /><circle cx="2" cy="11" r="1.4" fill="#d8a020" />
                </G>
              </ToolBtn>
              <ToolArrow><CaretDown $c="#777" $s={3} /></ToolArrow>
              <ToolBtn>
                <G>
                  <path d="M8 0.5 L11 4 H5 Z M8 15.5 L5 12 H11 Z M0.5 8 L4 5 V11 Z M15.5 8 L12 11 V5 Z" fill="#e0a820" />
                  <circle cx="8" cy="8" r="2.6" fill="#fff" stroke="#444" />
                </G>
              </ToolBtn>
              <ToolBtn><Mag inner="updown" /></ToolBtn>
              <ToolBtn><Mag inner="plus" /></ToolBtn>
              <ToolBtn><Mag inner="blue" /></ToolBtn>
              <ToolBtn><Mag inner="green" /></ToolBtn>
              <ToolBtn><Mag inner="updown" /></ToolBtn>
              <ToolSep />
              <ToolText $w={33} $ml={5}>Select</ToolText>
              <ToolBtn>
                <G>
                  <rect x="2" y="2" width="6" height="6" fill="#f00000" />
                  <path d="M6 5 L14 8.5 L11 10 L14 13 L12.5 14.5 L9.5 11.5 L8 15 Z" fill="#2c2c2c" />
                </G>
              </ToolBtn>
              <ToolText $w={31} $ml={-1}>Mode</ToolText>
              <ToolArrow $w={10}><CaretDown $c="#888" $s={3} /></ToolArrow>
              <ToolSpace $w={5} />
              <ToolBtn>{toolIcons.sel4}</ToolBtn>
              <ToolBtn><SelBox mode="vertex" /></ToolBtn>
              <ToolBtn><SelBox mode="edge" /></ToolBtn>
              <ToolBtn $on><SelBox mode="face" /></ToolBtn>
              <ToolBtn><SelBox mode="body" /></ToolBtn>
              <ToolBtn><SelBox mode="none" mesh /></ToolBtn>
              <ToolBtn><SelBox mode="edge" mesh /></ToolBtn>
              <ToolBtn><SelBox mode="face" mesh /></ToolBtn>
              <ToolBtn>
                <G>
                  <text x="0.5" y="5" fontSize="5" fill="#999" fontFamily="Liberation Sans">X.Y.Z</text>
                  <path d="M6 7 L11 15 M5 7 L10 8 L6 11 Z" stroke="#d8a020" strokeWidth="1.4" fill="#d8a020" />
                </G>
              </ToolBtn>
              <ToolBtn>
                <G>
                  <path d="M1 2 H13 L15 5 L13 8 H1 Z" fill="#fff" stroke="#444" />
                  <text x="2.5" y="7" fontSize="5" fill="#333" fontFamily="Liberation Sans">100</text>
                  <path d="M8 9 L12 15" stroke="#d8a020" strokeWidth="1.6" />
                </G>
              </ToolBtn>
              <ToolBtn>
                <G>
                  <path d="M1 2 H13 L15 5 V12 H1 Z" fill="#e4e4e4" stroke="#a8a8a8" />
                  <text x="2.5" y="9.5" fontSize="6" fill="#999" fontFamily="Liberation Sans">Abc</text>
                  <path d="M9 11 L12 15" stroke="#c8b070" strokeWidth="1.6" />
                </G>
              </ToolBtn>
              <ToolSep />
              <ToolSpace $w={1} />
              <ToolBtn>
                <G>
                  <path d="M1 9 L6 5 L10 7 L15 2 M1 13 H15" stroke="#c8c8c8" strokeWidth="1.2" />
                </G>
              </ToolBtn>
              <ToolSep />
              <ToolBtn>
                <G>
                  <rect x="1" y="2" width="14" height="14" fill="#e8c050" stroke="#444" />
                  <rect x="5" y="0.5" width="6" height="3" fill="#666" />
                </G>
              </ToolBtn>
              <ToolText $w={52} $ml={-1}>Clipboard</ToolText>
              <ToolArrow $w={10}><CaretDown $c="#888" $s={3} /></ToolArrow>
              <ToolText $w={52} $ml={10}>[ Empty ]</ToolText>
              <ToolSep />
              <ToolSpace $w={1} />
              <ToolBtn>
                <G>
                  <polygon points="8,1 15,4 8,7 1,4" fill="#fff" stroke="#333" strokeWidth="0.8" />
                  <polygon points="1,4 8,7 8,15 1,12" fill="#20c020" stroke="#333" strokeWidth="0.8" />
                  <polygon points="8,7 15,4 15,12 8,15" fill="#fff" stroke="#333" strokeWidth="0.8" />
                  <path d="M8 2 V5 M6.5 3.5 H9.5" stroke="#d8a020" />
                </G>
              </ToolBtn>
              <ToolText $w={35} $ml={-1}>Extend</ToolText>
              <ToolArrow $w={10}><CaretDown $c="#888" $s={3} /></ToolArrow>
              <ToolSpace $w={6} />
              <ToolBtn>
                <G>
                  <path d="M7.5 1 C10.5 1 12 3 12 5 C12 7.5 9 9.5 7.5 12 C6 9.5 3 7.5 3 5 C3 3 4.5 1 7.5 1 Z" fill="#e0a818" />
                  <circle cx="7.5" cy="5" r="1.6" fill="#fff" />
                  <path d="M0.5 14 H14.5" stroke="#666" />
                </G>
              </ToolBtn>
              <ToolText $w={47}>Select By</ToolText>
              <ToolArrow $w={10}><CaretDown $c="#888" $s={3} /></ToolArrow>
              <ToolSpace $w={6} />
              <ToolBtn>
                <G>
                  <path d="M0 8 H5" stroke="#70a020" />
                  <path d="M5 5 L7.5 2 H15 V11 L13 14" stroke="#1a5a1a" fill="#9ae89a" />
                  <rect x="5" y="5" width="9" height="9" fill="#20d020" stroke="#1a5a1a" />
                </G>
              </ToolBtn>
              <ToolText $w={42}>Convert</ToolText>
              <ToolArrow $w={10}><CaretDown $c="#888" $s={3} /></ToolArrow>
              <Overflow><CaretDown $c="#111" $s={4} /></Overflow>
            </Toolbar>
            <Viewport>
              <ModelTitle>
                <ModelHead>D: Steady-State Thermal</ModelHead>
                <div>Imported Load (External Data)</div>
                <div>T</div>
                <div>5</div>
              </ModelTitle>
              <BrandBlock>
                <BrandName>Ansys</BrandName>
                <BrandVersion>2024 R2</BrandVersion>
              </BrandBlock>
              <ModelArt />
              <ScaleLabel $x={427} $y={755}>0.000</ScaleLabel>
              <ScaleLabel $x={606} $y={755}>3.000</ScaleLabel>
              <ScaleLabel $x={787} $y={755}>6.000 (in)</ScaleLabel>
              <ScaleBar>
                <ScaleSeg $black /><ScaleSeg $black={false} /><ScaleSeg $black /><ScaleSeg $black={false} />
              </ScaleBar>
              <ScaleLabel $x={516} $y={796}>1.500</ScaleLabel>
              <ScaleLabel $x={695} $y={796}>4.500</ScaleLabel>
              <Dialog>
                <DialogTitle>External Data Details</DialogTitle>
                <DialogBody>
                  <SectionBar>Definition</SectionBar>
                  <FileRow>
                    <FileLabel>File Name:</FileLabel>
                    <FileInput>Z:\Propulsion\2024-2025\FA24\Caleb Senior Design 1250lbf Liquid Motor\MENG Stuff\Z_temperature_distribution.csv</FileInput>
                    <DotsButton>...</DotsButton>
                  </FileRow>
                  <PropTable>
                    <colgroup><col width="215" /><col width="499" /></colgroup>
                    <tbody>
                      <tr><th>Property</th><th>Value</th></tr>
                      <tr><td>Format Type</td><td><PadText $up={4}>Delimited</PadText><DropBtn><CaretDown $c="#444" $s={3} /></DropBtn></td></tr>
                      <tr><td>Delimiter Type</td><td><PadText $up={4}>Comma</PadText><DropBtn><CaretDown $c="#444" $s={3} /></DropBtn></td></tr>
                      <tr><td>Skip Rows</td><td>1</td></tr>
                      <tr><td>Skip Footer</td><td>0</td></tr>
                    </tbody>
                  </PropTable>
                  <DataTable>
                    <colgroup><col width="52" /><col width="215" /><col width="156" /><col width="128" /><col width="163" /></colgroup>
                    <tbody>
                      <tr><th>Column</th><th>Data Type</th><th>Data Unit</th><th>Name</th><th>Combined Identifier</th></tr>
                      <tr>
                        <td>A</td>
                        <td><PadText $l={3} $up={3}>X Coordinate</PadText><DropBtn $big><CaretDown $c="#444" $s={3} /></DropBtn></td>
                        <td><PadText $l={2} $up={3}>mm</PadText><DropBtn $big><CaretDown $c="#444" $s={3} /></DropBtn></td>
                        <td><PadText $l={2}>X Coordinate@A</PadText></td>
                        <td><PadText $l={3}>File1:X Coordinate@A</PadText></td>
                      </tr>
                      <tr>
                        <td>B</td>
                        <td><PadText $l={3} $up={3}>Temperature</PadText><DropBtn $big><CaretDown $c="#444" $s={3} /></DropBtn></td>
                        <td><PadText $l={2} $up={3}>K</PadText><DropBtn $big><CaretDown $c="#444" $s={3} /></DropBtn></td>
                        <td><PadText $l={2}>Temperature@B</PadText></td>
                        <td><PadText $l={3}>File1:Temperature@B</PadText></td>
                      </tr>
                    </tbody>
                  </DataTable>
                  <DialogSpacer />
                  <TabLine />
                  <DlgTabs>
                    <DlgTab $on>Definition</DlgTab>
                    <DlgTab>Preview</DlgTab>
                  </DlgTabs>
                  <DlgActions>
                    <DlgButton>OK</DlgButton>
                    <DlgButton>Cancel</DlgButton>
                  </DlgActions>
                </DialogBody>
              </Dialog>
            </Viewport>
            <TabBar>
              <TabItem $on $w={63}>Geometry</TabItem>
              <TabItem>Messages</TabItem>
            </TabBar>
          </ViewPane>
        </Workspace>
      </MainColumn>
      <RightPanel>
        <RightTop><CaretDown $c="#777" $s={3} /></RightTop>
        <InfoBand><InfoDot>i</InfoDot></InfoBand>
        <NameBox>B1</NameBox>
        <GridRow $h={20}>
          <Corner><svg width="14" height="14" viewBox="0 0 14 14"><polygon points="14,0 14,14 0,14" fill="#c4c4c4" /></svg></Corner>
          <ColHead />
        </GridRow>
        {rows.map(r => (
          <GridRow key={r}>
            <RowHead>{r}</RowHead>
            <Cell>{r === 1 ? "L" : ""}</Cell>
          </GridRow>
        ))}
        <SheetFoot><LeftTri /></SheetFoot>
      </RightPanel>
    </Page>
  );
}
